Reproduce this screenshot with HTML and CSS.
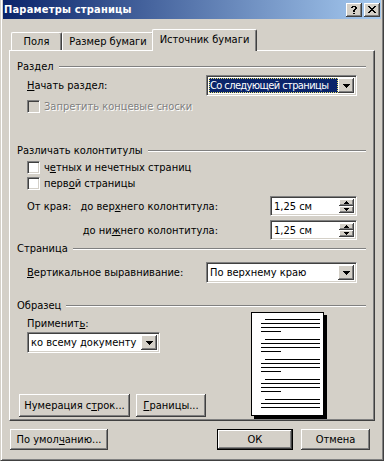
FILE: index.html
```html
<!DOCTYPE html>
<html lang="ru">
<head>
    <meta charset="UTF-8">
    <meta name="viewport" content="width=device-width, initial-scale=1.0">
    <title>Параметры страницы</title>
    <link rel="stylesheet" href="styles.css">
</head>
<body>
    <div class="window">
        <div class="titlebar">
            <span class="title">Параметры страницы</span>
            <div class="caption">
                <span class="cap-btn">
                    <svg width="6" height="8" viewBox="0 0 6 8"><path d="M1 0h4v1h-4z M0 1h2v1h-2z M4 1h2v1h-2z M4 2h2v1h-2z M3 3h2v1h-2z M2 4h2v2h-2z M2 7h2v1h-2z" fill="#000"/></svg>
                </span>
                <span class="cap-btn">
                    <svg width="8" height="7" viewBox="0 0 8 7"><path d="M0 0h2v1h-2z M6 0h2v1h-2z M1 1h2v1h-2z M5 1h2v1h-2z M2 2h4v1h-4z M3 3h2v1h-2z M2 4h4v1h-4z M1 5h2v1h-2z M5 5h2v1h-2z M0 6h2v1h-2z M6 6h2v1h-2z" fill="#000"/></svg>
                </span>
            </div>
        </div>

        <div class="tabs">
            <div class="tab tab-fields">Поля</div>
            <div class="tab tab-size">Размер бумаги</div>
            <div class="tab active">Источник бумаги</div>
        </div>

        <div class="panel">
            <div class="group-head"><span>Раздел</span><i class="etch"></i></div>
            <div class="row row-start">
                <span><u>Н</u>ачать раздел:</span>
                <div class="combo">
                    <span class="combo-text"><span class="selected">Со следующей страницы</span></span>
                    <span class="drop"><svg width="7" height="4" viewBox="0 0 7 4"><path d="M0 0h7v1h-7z M1 1h5v1h-5z M2 2h3v1h-3z M3 3h1v1h-1z" fill="#000"/></svg></span>
                </div>
            </div>
            <div class="row check-row disabled row-endnotes">
                <span class="box"></span><span>Запретить концевые сноски</span>
            </div>

            <div class="group-head head-hf"><span>Различать колонтитулы</span><i class="etch"></i></div>
            <div class="row check-row row-even">
                <span class="box"></span><span>ч<u>е</u>тных и нечетных страниц</span>
            </div>
            <div class="row check-row row-firstpage">
                <span class="box"></span><span>перв<u>о</u>й страницы</span>
            </div>
            <div class="row spin-row spin-top">
                <span class="edge-label">От края:</span>
                <span class="spin-label">до вер<u>х</u>него колонтитула:</span>
                <div class="spin">
                    <span class="spin-text">1,25 см</span>
                    <span class="spin-btns">
                        <span class="spin-btn"><svg width="5" height="3" viewBox="0 0 5 3"><path d="M2 0h1v1h-1z M1 1h3v1h-3z M0 2h5v1h-5z" fill="#000"/></svg></span>
                        <span class="spin-btn"><svg width="5" height="3" viewBox="0 0 5 3"><path d="M0 0h5v1h-5z M1 1h3v1h-3z M2 2h1v1h-1z" fill="#000"/></svg></span>
                    </span>
                </div>
            </div>
            <div class="row spin-row spin-bottom">
                <span class="edge-label"></span>
                <span class="spin-label">до ни<u>ж</u>него колонтитула:</span>
                <div class="spin">
                    <span class="spin-text">1,25 см</span>
                    <span class="spin-btns">
                        <span class="spin-btn"><svg width="5" height="3" viewBox="0 0 5 3"><path d="M2 0h1v1h-1z M1 1h3v1h-3z M0 2h5v1h-5z" fill="#000"/></svg></span>
                        <span class="spin-btn"><svg width="5" height="3" viewBox="0 0 5 3"><path d="M0 0h5v1h-5z M1 1h3v1h-3z M2 2h1v1h-1z" fill="#000"/></svg></span>
                    </span>
                </div>
            </div>

            <div class="group-head head-page"><span>Страница</span><i class="etch"></i></div>
            <div class="row row-valign">
                <span><u>В</u>ертикальное выравнивание:</span>
                <div class="combo">
                    <span class="combo-text">По верхнему краю</span>
                    <span class="drop"><svg width="7" height="4" viewBox="0 0 7 4"><path d="M0 0h7v1h-7z M1 1h5v1h-5z M2 2h3v1h-3z M3 3h1v1h-1z" fill="#000"/></svg></span>
                </div>
            </div>

            <div class="group-head head-sample"><span>Образец</span><i class="etch"></i></div>
            <div class="sample">
                <div class="sample-left">
                    <div class="apply-label">Применит<u>ь</u>:</div>
                    <div class="combo combo-apply">
                        <span class="combo-text">ко всему документу</span>
                        <span class="drop"><svg width="7" height="4" viewBox="0 0 7 4"><path d="M0 0h7v1h-7z M1 1h5v1h-5z M2 2h3v1h-3z M3 3h1v1h-1z" fill="#000"/></svg></span>
                    </div>
                    <div class="sample-buttons">
                        <span class="btn btn-lines">Нумерация с<u>т</u>рок...</span>
                        <span class="btn btn-borders"><u>Г</u>раницы...</span>
                    </div>
                </div>
                <svg class="preview" width="76" height="107" viewBox="0 0 76 107">
                    <rect x="73" y="3" width="3" height="104" fill="#000"/>
                    <rect x="3" y="104" width="73" height="3" fill="#000"/>
                    <rect x="0.5" y="0.5" width="72" height="103" fill="#fff" stroke="#000"/>
                    <g fill="#000">
                        <rect x="14" y="7" width="55" height="1"/><rect x="10" y="11" width="59" height="1"/><rect x="10" y="15" width="59" height="1"/><rect x="10" y="19" width="20" height="1"/>
                        <rect x="14" y="27" width="55" height="1"/><rect x="10" y="31" width="59" height="1"/><rect x="10" y="35" width="59" height="1"/><rect x="10" y="39" width="20" height="1"/>
                        <rect x="14" y="47" width="55" height="1"/><rect x="10" y="51" width="59" height="1"/><rect x="10" y="55" width="59" height="1"/><rect x="10" y="59" width="20" height="1"/>
                        <rect x="14" y="67" width="55" height="1"/><rect x="10" y="71" width="59" height="1"/><rect x="10" y="75" width="59" height="1"/><rect x="10" y="79" width="20" height="1"/>
                        <rect x="14" y="87" width="55" height="1"/><rect x="10" y="91" width="59" height="1"/><rect x="10" y="95" width="59" height="1"/>
                    </g>
                </svg>
            </div>
        </div>

        <div class="footer">
            <span class="btn btn-default">По умол<u>ч</u>анию...</span>
            <span class="btn btn-ok">ОК</span>
            <span class="btn btn-cancel">Отмена</span>
        </div>
    </div>
</body>
</html>
```

FILE: styles.css
```css
body {
    margin: 0;
    background: #D4D0C8;
    font-family: "DejaVu Sans Condensed", "DejaVu Sans", sans-serif;
    font-size: 11px;
    line-height: 13px;
    color: #000;
}

u {
    text-decoration: underline;
    text-underline-offset: 1px;
}

/* Рамка окна */
.window {
    box-sizing: border-box;
    width: 384px;
    height: 461px;
    border: 1px solid;
    border-color: #D4D0C8 #404040 #404040 #D4D0C8;
    border-top: none;
    box-shadow: inset 1px 0 #fff, inset -1px -1px #808080;
    padding: 0 2px 2px 2px;
}

.titlebar {
    display: flex;
    align-items: center;
    height: 19px;
    padding-left: 1px;
    background: linear-gradient(to right, #0A246A, #A6CAF0);
}

.title {
    color: #fff;
    font-weight: bold;
    letter-spacing: 0.2px;
}

.caption {
    display: flex;
    gap: 2px;
    margin-left: auto;
    margin-right: 1px;
}

.cap-btn {
    box-sizing: border-box;
    width: 16px;
    height: 14px;
    display: flex;
    align-items: center;
    justify-content: center;
    background: #D4D0C8;
    box-shadow: inset -1px -1px #404040, inset 1px 1px #fff, inset -2px -2px #808080;
}

/* Вкладки */
.tabs {
    display: flex;
    align-items: flex-end;
    height: 21px;
    margin-top: 10px;
    padding-left: 8px;
}

.tab {
    box-sizing: border-box;
    height: 18px;
    display: flex;
    align-items: center;
    justify-content: center;
    border-left: 1px solid #fff;
    border-top: 1px solid #fff;
    border-right: 1px solid #404040;
    border-radius: 2px 2px 0 0;
    box-shadow: inset -1px 0 #808080;
    background: #D4D0C8;
}

.tab-fields {
    width: 51px;
}

.tab-size {
    width: 92px;
}

.tab.active {
    width: 105px;
    height: 22px;
    margin-left: -2px;
    margin-bottom: -1px;
    padding-bottom: 2px;
    position: relative;
    z-index: 1;
}

.panel {
    box-sizing: border-box;
    height: 371px;
    margin: 0 6px;
    border: 1px solid;
    border-color: #fff #404040 #404040 #fff;
    box-shadow: inset -1px -1px #808080;
    padding: 9px 8px 0 7px;
}

.group-head {
    display: flex;
    align-items: center;
    height: 13px;
}

.etch {
    flex: 1;
    height: 0;
    margin-left: 5px;
    border-top: 1px solid #808080;
    border-bottom: 1px solid #fff;
}

.head-hf {
    margin-top: 31px;
}

.head-page {
    margin-top: 2px;
}

.head-sample {
    margin-top: 16px;
}

.row {
    display: flex;
    align-items: center;
    padding-left: 10px;
}

.row-start {
    margin-top: 2px;
    height: 21px;
}

.row-valign {
    margin-top: 7px;
    height: 21px;
}

/* Поля со списком */
.combo {
    box-sizing: border-box;
    display: flex;
    width: 151px;
    height: 21px;
    margin-left: auto;
    margin-right: 9px;
    background: #fff;
    border: 1px solid;
    border-color: #808080 #fff #fff #808080;
    box-shadow: inset 1px 1px #404040, inset -1px -1px #D4D0C8;
    padding: 2px;
}

.combo-text {
    flex: 1;
    min-width: 0;
    display: flex;
    align-items: center;
    padding-left: 1px;
    white-space: nowrap;
}

.combo-text .selected {
    flex: 1;
    align-self: stretch;
    display: flex;
    align-items: center;
    margin-left: -1px;
    padding-left: 1px;
    background: #0A246A;
    color: #fff;
    letter-spacing: -0.6px;
    outline: 1px dotted #E8E070;
    outline-offset: -1px;
}

.drop {
    box-sizing: border-box;
    width: 16px;
    flex: none;
    display: flex;
    align-items: center;
    justify-content: center;
    background: #D4D0C8;
    box-shadow: inset -1px -1px #404040, inset 1px 1px #fff, inset -2px -2px #808080;
}

/* Флажки */
.check-row {
    height: 13px;
}

.row-endnotes {
    margin-top: 4px;
}

.row-even {
    margin-top: 4px;
}

.row-firstpage {
    margin-top: 3px;
}

.box {
    box-sizing: border-box;
    width: 13px;
    height: 13px;
    margin-right: 4px;
    background: #fff;
    border: 1px solid;
    border-color: #808080 #fff #fff #808080;
    box-shadow: inset 1px 1px #404040, inset -1px -1px #D4D0C8;
}

.disabled {
    color: #808080;
    text-shadow: 1px 1px #fff;
}

.disabled .box {
    background: #D4D0C8;
}

/* Счётчики */
.spin-row {
    height: 20px;
}

.spin-top {
    margin-top: 6px;
}

.spin-bottom {
    margin-top: 4px;
}

.edge-label {
    width: 50px;
}

.spin-label {
    width: 141px;
    text-align: right;
}

.spin {
    box-sizing: border-box;
    display: flex;
    width: 87px;
    height: 20px;
    margin-left: auto;
    margin-right: 9px;
    background: #fff;
    border: 1px solid;
    border-color: #808080 #fff #fff #808080;
    box-shadow: inset 1px 1px #404040, inset -1px -1px #D4D0C8;
    padding: 2px;
}

.spin-text {
    flex: 1;
    display: flex;
    align-items: center;
    padding-left: 1px;
}

.spin-btns {
    display: flex;
    flex-direction: column;
    width: 15px;
}

.spin-btn {
    box-sizing: border-box;
    flex: 1;
    display: flex;
    align-items: center;
    justify-content: center;
    background: #D4D0C8;
    box-shadow: inset -1px -1px #404040, inset 1px 1px #fff, inset -2px -2px #808080;
}

/* Образец */
.sample {
    display: flex;
}

.sample-left {
    width: 234px;
}

.apply-label {
    margin-top: 5px;
    padding-left: 10px;
}

.combo-apply {
    width: 133px;
    margin: 2px 0 0 10px;
}

.sample-buttons {
    display: flex;
    gap: 6px;
    margin: 41px 0 0 2px;
}

.btn {
    box-sizing: border-box;
    display: flex;
    align-items: center;
    justify-content: center;
    height: 23px;
    background: #D4D0C8;
    box-shadow: inset -1px -1px #404040, inset 1px 1px #fff, inset -2px -2px #808080;
    white-space: nowrap;
}

.btn-lines {
    width: 111px;
}

.btn-borders {
    width: 70px;
}

.preview {
    display: block;
}

/* Кнопки диалога */
.footer {
    display: flex;
    margin: 8px 11px 0 7px;
}

.footer .btn {
    height: 21px;
}

.btn-default {
    width: 98px;
}

.btn-ok {
    width: 76px;
    margin-left: auto;
    border: 1px solid #000;
}

.btn-cancel {
    width: 69px;
    margin-left: 8px;
}
```
